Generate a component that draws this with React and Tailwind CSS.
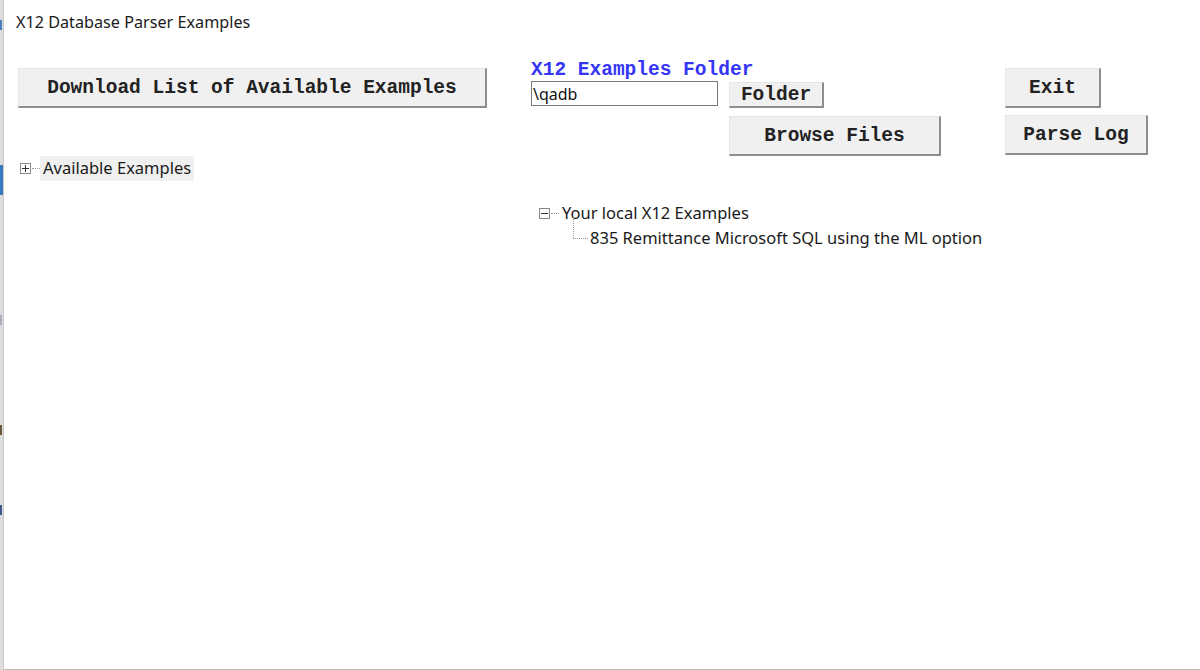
import React from "react";

const mono = { fontFamily: '"Courier New", "Liberation Mono", monospace' };

function Btn({ children, className = "" }) {
  return (
    <div
      className={
        "flex items-center justify-center pt-[3px] bg-[#f0f0f0] border-t border-l border-[#e6e6e6] border-r-2 border-b-2 border-r-[#8e8e8e] border-b-[#8e8e8e] font-bold text-[19.5px] text-[#222] leading-none " +
        className
      }
      style={mono}
    >
      {children}
    </div>
  );
}

function Box({ minus }) {
  return (
    <div className="relative w-[11px] h-[11px] border border-[#8a8a8a] bg-white flex items-center justify-center">
      <div className="absolute w-[7px] h-[1px] bg-[#333]" />
      {!minus && <div className="absolute w-[1px] h-[7px] bg-[#333]" />}
    </div>
  );
}

export default function App() {
  const sans = { fontFamily: '"Noto Sans", "Open Sans", sans-serif' };
  return (
    <div className="w-[1200px] h-[670px] flex bg-white overflow-hidden">
      <div className="w-[3px] h-full bg-[#dcdcdc] flex flex-col">
        <div className="h-[10px] mt-[20px] bg-[#4a7fc0] w-[2px]" />
        <div className="h-[30px] mt-[135px] bg-[#3b78c4] w-[3px]" />
        <div className="h-[10px] mt-[120px] bg-[#a9b0bb] w-[2px]" />
        <div className="h-[10px] mt-[100px] bg-[#6b5a3a] w-[2px]" />
        <div className="h-[10px] mt-[70px] bg-[#3d5b8a] w-[2px]" />
      </div>
      <div className="flex-1 h-full border-l border-[#c8c8c8] border-b border-b-[#bdbdbd] flex flex-col" style={sans}>
        <div className="h-[45px] pl-[12px] flex items-center text-[16.2px] text-[#1a1a1a]">
          X12 Database Parser Examples
        </div>
        <div className="flex pl-[14px] pt-[15px]">
          <div className="w-[469px] shrink-0 pt-[8px]">
            <Btn className="w-[469px] h-[40px]">Download List of Available Examples</Btn>
          </div>
          <div className="ml-[44px] w-[474px] shrink-0 flex flex-col">
            <div className="h-[20px] pt-[2px] flex items-center font-bold text-[19.5px] text-[#3535f8] leading-none" style={mono}>
              X12 Examples Folder
            </div>
            <div className="flex items-start">
              <div className="w-[187px] h-[25px] mt-[1px] border border-[#7a7a7a] bg-white flex items-center pl-[1px] text-[16px] text-[#111]">
                \qadb
              </div>
              <Btn className="ml-[11px] mt-[2px] w-[95px] h-[26px]">Folder</Btn>
            </div>
            <div className="pl-[198px] mt-[8px]">
              <Btn className="w-[212px] h-[40px]">Browse Files</Btn>
            </div>
          </div>
          <div className="shrink-0 flex flex-col pt-[8px]">
            <Btn className="w-[96px] h-[40px]">Exit</Btn>
            <Btn className="w-[143px] h-[40px] mt-[7px]">Parse Log</Btn>
          </div>
        </div>
        <div className="flex items-center pl-[16px] mt-[0px] h-[25px]">
          <Box />
          <div className="w-[8px] border-t border-dotted border-[#999] ml-[1px]" />
          <div className="bg-[#f0f0f0] h-[25px] flex items-center px-[3px] text-[16.5px] text-[#1a1a1a]">
            Available Examples
          </div>
        </div>
        <div className="pl-[535px] mt-[20px] flex flex-col text-[16.5px] text-[#1a1a1a]">
          <div className="flex items-center h-[24px]">
            <Box minus />
            <div className="w-[8px] border-t border-dotted border-[#999] ml-[1px]" />
            <span className="ml-[3px]">Your local X12 Examples</span>
          </div>
          <div className="flex items-center h-[26px] relative">
            <div className="absolute left-[34px] top-[-8px] h-[21px] border-l border-dotted border-[#999]" />
            <div className="ml-[34px] w-[15px] border-t border-dotted border-[#999] mt-[0px]" />
            <span className="ml-[2px]">835 Remittance Microsoft SQL using the ML option</span>
          </div>
        </div>
      </div>
    </div>
  );
}
